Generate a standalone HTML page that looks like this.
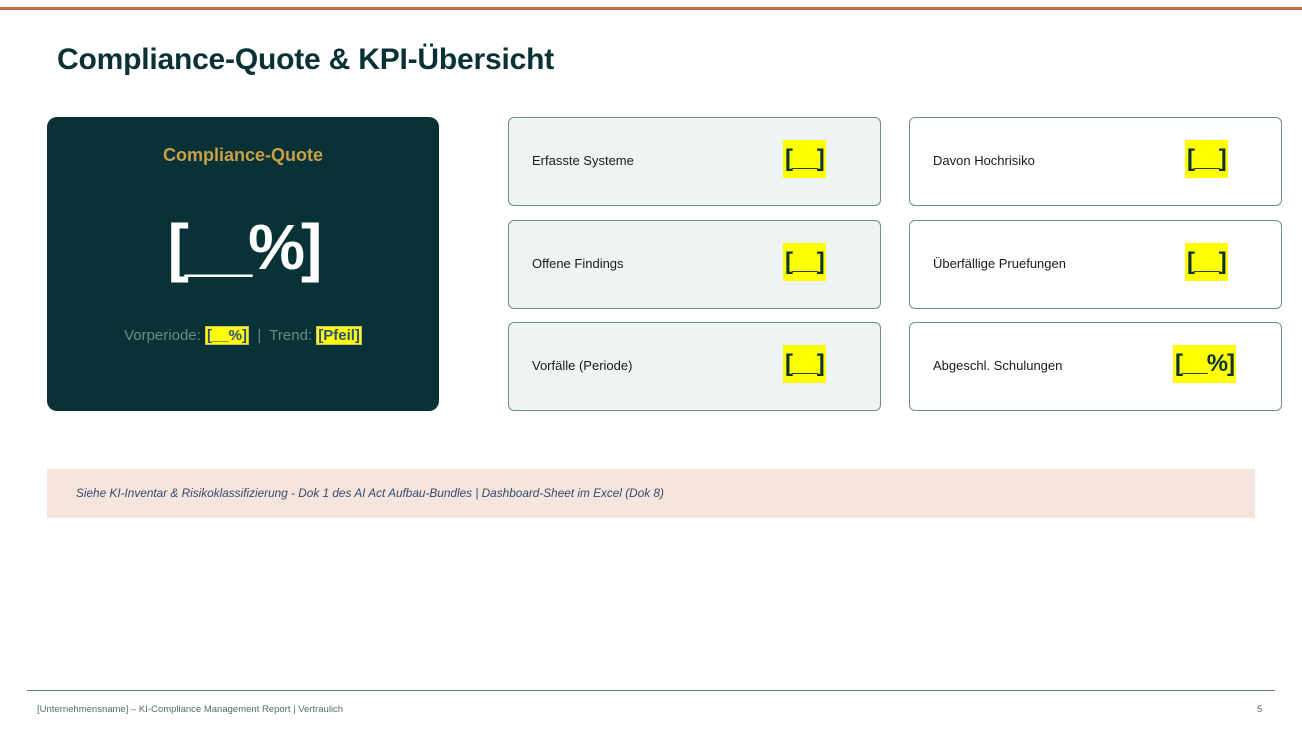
<!DOCTYPE html>
<html><head><meta charset="utf-8"><style>
*{margin:0;padding:0;box-sizing:border-box}
body{width:1302px;height:732px;background:#fff;position:relative;overflow:hidden;font-family:"Liberation Sans",sans-serif}
.topbar{position:absolute;left:0;top:7px;width:1302px;height:3px;background:#c8694a}
h1{position:absolute;left:57px;top:43px;font-size:30px;font-weight:bold;color:#0a3236;letter-spacing:-0.2px}
.big{position:absolute;left:47px;top:117px;width:392px;height:294px;background:#083235;border-radius:10px;text-align:center}
.cq{position:absolute;top:28px;width:100%;font-size:18px;font-weight:bold;color:#c9a04a}
.pct{position:absolute;top:93px;width:100%;font-size:64px;font-weight:bold;color:#fff;letter-spacing:-4px}
.sub{position:absolute;top:210px;width:100%;font-size:15px;color:#6e8a88}
.hl{background:#ffff00;color:#2a5080;font-weight:bold;border:1px solid #c9c060;padding:0 1px}
.card{position:absolute;width:373px;height:89px;border:1px solid #6f8f88;border-radius:6px;background:#eef4f4}
.card.w{background:#fff}
.card .l{position:absolute;left:23px;top:35px;font-size:13px;color:#1a1a1a}
.card .v{position:absolute;top:22px;height:38px;background:#ffff00;font-size:24px;font-weight:bold;color:#0a3236;line-height:38px;padding:0 2px;letter-spacing:-1px}
.note{position:absolute;left:47px;top:469px;width:1208px;height:49px;background:#f5e5dd;font-size:11.8px;font-style:italic;color:#344a6c;padding:17px 0 0 29px}
.fl{position:absolute;left:27px;top:690px;width:1248px;height:1px;background:#5a8078}
.ft{position:absolute;top:704px;font-size:9.5px;color:#4e7068}
</style></head><body>
<div class="topbar"></div>
<h1>Compliance-Quote &amp; KPI-Übersicht</h1>
<div class="big">
<div class="cq">Compliance-Quote</div>
<div class="pct">[__%]</div>
<div class="sub">Vorperiode: <span class="hl">[__%]</span> &nbsp;|&nbsp; Trend: <span class="hl">[Pfeil]</span></div>
</div>
<div class="card" style="left:508px;top:117px"><div class="l">Erfasste Systeme</div><div class="v" style="left:274px">[__]</div></div>
<div class="card" style="left:508px;top:220px"><div class="l">Offene Findings</div><div class="v" style="left:274px">[__]</div></div>
<div class="card" style="left:508px;top:322px"><div class="l">Vorfälle (Periode)</div><div class="v" style="left:274px">[__]</div></div>
<div class="card w" style="left:909px;top:117px"><div class="l">Davon Hochrisiko</div><div class="v" style="left:275px">[__]</div></div>
<div class="card w" style="left:909px;top:220px"><div class="l">Überfällige Pruefungen</div><div class="v" style="left:275px">[__]</div></div>
<div class="card w" style="left:909px;top:322px"><div class="l">Abgeschl. Schulungen</div><div class="v" style="left:263px">[__%]</div></div>
<div class="note">Siehe KI-Inventar &amp; Risikoklassifizierung - Dok 1 des AI Act Aufbau-Bundles | Dashboard-Sheet im Excel (Dok 8)</div>
<div class="fl"></div>
<div class="ft" style="left:37px">[Unternehmensname] – KI-Compliance Management Report | Vertraulich</div>
<div class="ft" style="left:1257px">5</div>
</body></html>
